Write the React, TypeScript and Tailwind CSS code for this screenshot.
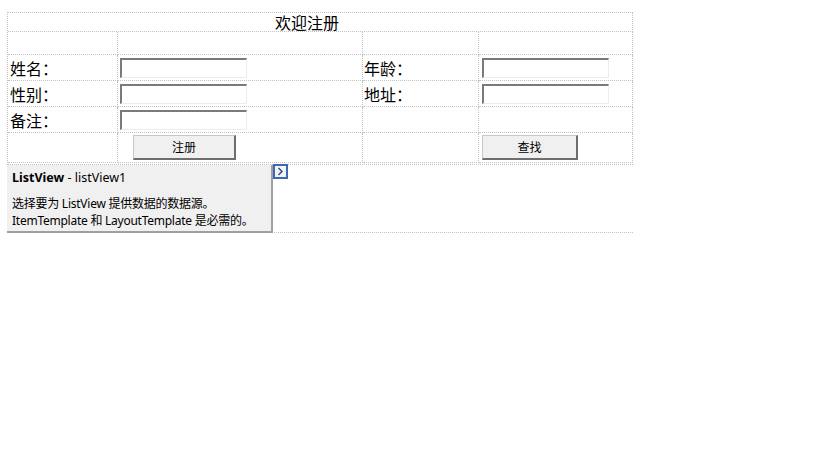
import React from "react";

const cjk = "font-['SimSun','Noto_Sans_CJK_SC',sans-serif]";

function TextBox() {
  return (
    <div className="h-[20px] w-[127px] border-t-2 border-l-2 border-t-[#7a7a7a] border-l-[#7a7a7a] border-r border-b border-r-[#ececec] border-b-[#ececec] bg-white" />
  );
}

function Btn({ label, w }: { label: string; w: string }) {
  return (
    <div
      className={`${w} h-[25px] flex items-center justify-center bg-[#f0f0f0] border-t border-l border-t-[#c8c8c8] border-l-[#c8c8c8] border-r-2 border-b-2 border-r-[#6e6e6e] border-b-[#6e6e6e] text-[12px] text-black ${cjk}`}
    >
      {label}
    </div>
  );
}

const cell = "border-r border-b border-dotted border-[#c2c2c2] flex items-center";

export default function App() {
  return (
    <div className={`w-[819px] h-[460px] bg-white text-black ${cjk}`}>
      <div className="pt-[12px] pl-[7px]">
        <div className="grid grid-cols-[110px_245px_116px_154px] w-[626px] border-t border-l border-dotted border-[#c2c2c2]">
          <div className={`${cell} col-span-4 h-[19px] justify-center pr-[26px] text-[16px] leading-[18px]`}>
            欢迎注册
          </div>

          <div className={`${cell} h-[23px]`} />
          <div className={`${cell} h-[23px]`} />
          <div className={`${cell} h-[23px]`} />
          <div className={`${cell} h-[23px]`} />

          <div className={`${cell} h-[26px] pl-[2px] text-[16px]`}>姓名：</div>
          <div className={`${cell} h-[26px] pl-[2px]`}><TextBox /></div>
          <div className={`${cell} h-[26px] pl-[1px] text-[16px]`}>年龄：</div>
          <div className={`${cell} h-[26px] pl-[3px]`}><TextBox /></div>

          <div className={`${cell} h-[26px] pl-[2px] text-[16px]`}>性别：</div>
          <div className={`${cell} h-[26px] pl-[2px]`}><TextBox /></div>
          <div className={`${cell} h-[26px] pl-[1px] text-[16px]`}>地址：</div>
          <div className={`${cell} h-[26px] pl-[3px]`}><TextBox /></div>

          <div className={`${cell} h-[26px] pl-[2px] text-[16px]`}>备注：</div>
          <div className={`${cell} h-[26px] pl-[2px]`}><TextBox /></div>
          <div className={`${cell} h-[26px]`} />
          <div className={`${cell} h-[26px]`} />

          <div className={`${cell} h-[30px]`} />
          <div className={`${cell} h-[30px] pl-[15px]`}><Btn label="注册" w="w-[103px]" /></div>
          <div className={`${cell} h-[30px]`} />
          <div className={`${cell} h-[30px] pl-[3px]`}><Btn label="查找" w="w-[96px]" /></div>
        </div>

        <div className="relative mt-[1px] w-[626px] h-[69px] border-t border-b border-dotted border-[#c2c2c2]">
          <div className="relative z-10 w-[266px] h-[68px] bg-[#f0f0f0] border-r-2 border-b-2 border-r-[#a0a0a0] border-b-[#a0a0a0] pl-[5px] pt-[5px] font-['Segoe_UI','Noto_Sans','Noto_Sans_CJK_SC',sans-serif] text-[12px] text-black">
            <div className="leading-[16px] whitespace-nowrap text-[12.5px]">
              <span className="font-bold">ListView</span>
              <span> - listView1</span>
            </div>
            <div className="mt-[9px] leading-[17px] whitespace-nowrap tracking-[-0.25px]">
              <div>选择要为 ListView 提供数据的数据源。</div>
              <div>ItemTemplate 和 LayoutTemplate 是必需的。</div>
            </div>
          </div>
          <div className="absolute left-[266px] top-[-1px] z-20 w-[15px] h-[15px] border-2 border-[#3a6ab5] bg-[#f4f4f4] flex items-center justify-center">
            <svg width="7" height="9" viewBox="0 0 7 9">
              <path d="M1.5 1 L5 4.5 L1.5 8" fill="none" stroke="#2b4a7a" strokeWidth="1.4" />
            </svg>
          </div>
        </div>
      </div>
    </div>
  );
}
